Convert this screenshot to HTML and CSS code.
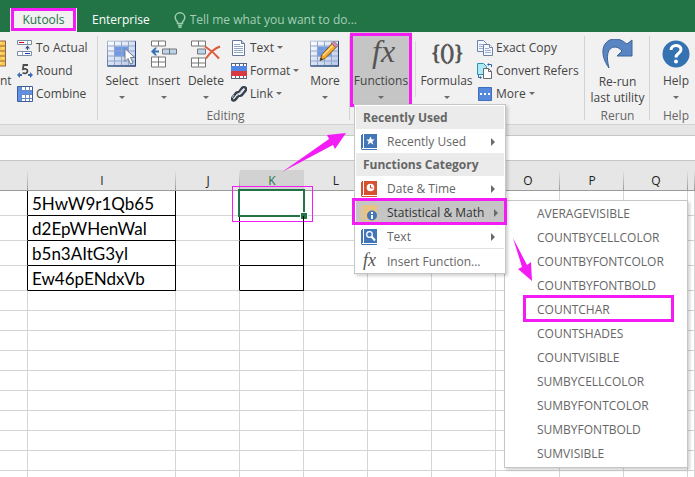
FILE: index.html
```html
<!DOCTYPE html>
<html lang="en">
<head>
<meta charset="utf-8">
<title>Workbook - Kutools</title>
<link rel="stylesheet" href="styles.css">
</head>
<body>
<svg class="defs" width="0" height="0" aria-hidden="true">
  <defs>
    <linearGradient id="cell" x1="0" y1="0" x2="1" y2="1"><stop offset="0" stop-color="#fff"/><stop offset="1" stop-color="#b4c6e6"/></linearGradient>
    <linearGradient id="frame" x1="0" y1="0" x2="1" y2="1"><stop offset="0" stop-color="#a9b8d0"/><stop offset="1" stop-color="#1e3d70"/></linearGradient>
    <symbol id="grid" viewBox="0 0 30 27">
      <rect x=".5" y=".5" width="28" height="25" fill="url(#cell)" stroke="url(#frame)"/>
      <path d="M8 6h14v10H8z" fill="#6f98e6"/>
      <path d="M1 5.500h27M1 10.500h27M1 15.500h27M1 20.500h27M7.500 1v24M14.500 1v24M21.500 1v24" stroke="#8fa5cc" fill="none"/>
      <path d="M28.500 1v24.500H1" stroke="#27467c" fill="none"/>
    </symbol>
    <symbol id="book" viewBox="0 0 16 16">
      <path d="M1 0h1v14H1zM3 0h13v14H3zM0 1h1v14h15v1H1l-1-1z" fill="currentColor"/>
    </symbol>
  </defs>
</svg>

<header class="tabs">
  <button class="tab tab-active marked">Kutools</button>
  <button class="tab">Enterprise</button>
  <label class="tell">
    <svg width="12" height="16" viewBox="0 0 12 16" fill="none" stroke="#9dcbb0" stroke-width="1.500"><path d="M3.500 11.500V10C2 8.500 1.200 7.300 1.200 5.500a4.800 4.700 0 0 1 9.600 0c0 1.800-.8 3-2.300 4.500v1.500zM4 13.500h4M4.500 15.300h3"/></svg>
    <input type="text" placeholder="Tell me what you want to do..." aria-label="Tell me">
  </label>
</header>

<section class="ribbon">
  <div class="group group-first">
    <div class="row">
      <button class="big content">
        <svg width="6" height="27" viewBox="0 0 6 27"><path d="M0 0h6v26H0z" fill="#8c6a45"/><path d="M0 1h5v4H0zM0 6h5v4H0zM0 11h5v4H0zM0 16h5v4H0zM0 21h5v4H0z" fill="#ffc64a"/><path d="M0 2h2v1H0zM2 7h2v1H2zM0 12h2v1H0zM2 17h2v1H2zM0 22h2v1H0z" fill="#fff0b0"/></svg>
        <span>nt</span><i class="down"></i>
      </button>
      <div class="stack">
        <button class="small">
          <svg width="16" height="16" viewBox="0 0 16 16"><path d="M.5.500h14v4H.5zM.5 11.500h14v4H.5z" fill="#fff" stroke="#7b8ba6"/><path d="M10.500 1v3M5.500 12v3" stroke="#9aa7bd"/><path d="M2 2h5v1H2z" fill="#d0021b"/><path d="M8 13h5v1H8z" fill="#1c3fc4"/><path d="M8 8.500l2.500-3 2.500 3h-2V10h-1V8.500z" fill="#35568c"/></svg>
          To Actual</button>
        <button class="small">
          <svg width="16" height="16" viewBox="0 0 16 16"><path d="M11 2H6.500L6 6.200c2-.8 4.500-.4 4.500 1.900S8 11 5.500 9.800" fill="none" stroke="#4c4c4c" stroke-width="1.800"/><path d="M0 12l3-3v2h2v2H3v2zM16 12l-3-3v2h-2v2h2v2z" fill="#3d6aa8"/></svg>
          Round</button>
        <button class="small">
          <svg width="16" height="16" viewBox="0 0 16 16"><path d="M.5.500h15v15H.5z" fill="#fff" stroke="#3d5f9c"/><path d="M1 1h3v14H1zM4 4h11v4H4z" fill="#5f92ee"/><path d="M4.500 1v14M8.500 1v14M12.500 1v14M1 4.500h14M4 8.500h11M4 12.500h11" stroke="#6c89bd"/></svg>
          Combine</button>
      </div>
    </div>
  </div>

  <div class="group group-editing">
    <div class="row">
      <button class="big">
        <svg width="30" height="27" viewBox="0 0 30 27"><use href="#grid"/><path d="M18 8v13l3-3 2.500 5.500 2.500-1-2.500-5.500h4z" fill="#fff" stroke="#707a8c"/></svg>
        <span>Select</span><i class="down"></i>
      </button>
      <button class="big">
        <svg width="27" height="27" viewBox="0 0 27 27" fill="#fff" stroke="#767676"><path d="M.5.500h14v5H.5zM7.500.500v5M.5 16.500h14v10H.5zM7.500 16v10M.5 21.500h14"/><path d="M11.500 8.500h14v5h-14z" fill="#bcd4ea"/><path d="M18.500 8v6"/><path d="M0 11l4-4h2L4 10h4v2H4l2 3H4z" fill="#3a73b4" stroke="none"/></svg>
        <span>Insert</span><i class="down"></i>
      </button>
      <button class="big">
        <svg width="30" height="27" viewBox="0 0 30 27" fill="#fff" stroke="#767676"><path d="M.5.500h14v5H.5zM7.500.500v5M.5 17.500h14v9H.5zM7.500 17v9M.5 22.500h14"/><path d="M6.500 8.500h8v5h-8z" fill="#bcd4ea"/><path d="M14 6c5 3 9 6 14 12M29 6c-6 2-10 6-14 12" fill="none" stroke="#e0573a" stroke-width="2"/></svg>
        <span>Delete</span><i class="down"></i>
      </button>
      <div class="stack">
        <button class="small">
          <svg width="16" height="16" viewBox="0 0 16 16"><path d="M1.500.500h9l3 3v12h-12z" fill="#fff" stroke="#64789c"/><path d="M10.500.500v3h3" fill="#c9d6ea" stroke="#64789c"/><path d="M3 4.500h6M3 6.500h9M3 8.500h9M3 10.500h9M3 12.500h9" stroke="#91a7c8"/></svg>
          Text<i class="down"></i></button>
        <button class="small">
          <svg width="16" height="16" viewBox="0 0 16 16"><path d="M0 0h16v16H0z" fill="#fff"/><path d="M0 3h16v5H0z" fill="#4f86e4"/><path d="M0 8h16v5H0z" fill="#d93a42"/><path d="M0 .5h16M0 15.500h16M.5 0v3M4.500 0v3M8.500 0v3M12.500 0v3M15.500 0v3M.5 13v3M4.500 13v3M8.500 13v3M12.500 13v3M15.500 13v3" stroke="#56647c"/></svg>
          Format<i class="down"></i></button>
        <button class="small">
          <svg width="16" height="16" viewBox="0 0 16 16" fill="none"><path d="M8 6l3-4c2-2 5 0 4 2l-4 5c-1 1-3 1-3 0M8 9l-3 4c-2 3-5 1-4-1l4-5c1-1 3-1 3 0" stroke="#39434f" stroke-width="2.500"/><path d="M6 10l5-6M3 9l-2 3M13 2l-2 2" stroke="#b9c5d2"/></svg>
          Link<i class="down"></i></button>
      </div>
      <button class="big">
        <svg width="30" height="27" viewBox="0 0 30 27"><use href="#grid"/><path d="M10 20l2-6L22 3l4 4-11 11z" fill="#f7a928" stroke="#80521d"/><path d="M13 15L23 5" stroke="#ffe09a" stroke-width="1.500"/><path d="M22 3l2-2 4 4-2 2z" fill="#e78dad" stroke="#85627f"/><path d="M10 20l1-3 2 2z" fill="#333"/></svg>
        <span>More</span><i class="down"></i>
      </button>
    </div>
    <div class="caption">Editing</div>
  </div>

  <div class="group group-functions">
    <div class="row">
      <button class="big functions marked">
        <svg class="glyph" width="26" height="28" viewBox="0 0 26 28" aria-hidden="true"><text x="4" y="22" font-size="32">fx</text></svg>
        <span>Functions</span><i class="down"></i>
      </button>
      <hr class="split">
      <button class="big formulas">
        <svg class="glyph upright" width="32" height="28" viewBox="0 0 32 28" aria-hidden="true"><text x="0" y="19" font-size="20">{()}</text></svg>
        <span>Formulas</span><i class="down"></i>
      </button>
      <div class="stack">
        <button class="small">
          <svg width="16" height="16" viewBox="0 0 16 16" fill="#f5f9ff" stroke="#6f83aa"><path d="M.5.500h6l3 3v8h-9z"/><path d="M2 4.500h4M2 6.500h4M2 8.500h4" stroke="#9bb0d2"/><path d="M6.500 4.500h6l3 3v8h-9z"/><path d="M12.500 4.500v3h3"/><path d="M8 8.500h4M8 10.500h6M8 12.500h6" stroke="#9bb0d2"/></svg>
          Exact Copy</button>
        <button class="small">
          <svg width="16" height="16" viewBox="0 0 16 16"><path d="M.5.500h6l3 3v8h-9z" fill="#aeeaf5" stroke="#2c94ad"/><path d="M6.500 5.500h5l3 3v7h-8z" fill="#fff" stroke="#6b6b6b"/><path d="M11.500 5.500v3h3" fill="none" stroke="#6b6b6b"/><path d="M11 1.500h3.500V4M4 14.500H1.500V12" fill="none" stroke="#2e66ac"/><path d="M12 0v3l-2-1.500zM3 13v3l2-1.500z" fill="#2e66ac"/></svg>
          Convert Refers</button>
        <button class="small">
          <svg width="16" height="16" viewBox="0 0 16 16"><path d="M1.500 1.500h13v13h-13z" fill="#5489dc" stroke="#3f6fb8"/><path d="M3 7h2v2H3zM7 7h2v2H7zM11 7h2v2h-2z" fill="#fff"/></svg>
          More<i class="down"></i></button>
      </div>
    </div>
    <div class="menu">
      <h2>Recently Used</h2>
      <button class="item"><svg class="blue" width="16" height="16" viewBox="0 0 16 16"><use href="#book"/><path d="M9.500 2.500l1.300 3h3l-2.400 2 1 3.200-2.900-1.900-2.900 1.900 1-3.200-2.400-2h3z" fill="#fff"/></svg>Recently Used<i class="right"></i></button>
      <h2>Functions Category</h2>
      <button class="item"><svg class="red" width="16" height="16" viewBox="0 0 16 16"><use href="#book"/><circle cx="9.500" cy="6.500" r="3.800" fill="#fff"/><path d="M9.500 4v3H12" stroke="#d6512f" fill="none"/></svg>Date &amp; Time<i class="right"></i></button>
      <button class="item item-open marked"><svg class="sand" width="16" height="16" viewBox="0 0 16 16"><use href="#book"/><circle cx="11" cy="10.500" r="5" fill="#4276b7"/><path d="M10 7h2v2h-2zM10 10h2v4h-2z" fill="#fff"/></svg>Statistical &amp; Math<i class="right"></i></button>
      <button class="item"><svg class="blue" width="16" height="16" viewBox="0 0 16 16"><use href="#book"/><circle cx="8.500" cy="5.500" r="2.800" fill="none" stroke="#fff" stroke-width="1.300"/><path d="M10.500 7.500l3.500 4" stroke="#fff" stroke-width="2"/></svg>Text<i class="right"></i></button>
      <hr>
      <button class="item"><svg class="glyph" width="16" height="16" viewBox="0 0 16 16" aria-hidden="true"><text x="2" y="12" font-size="18">fx</text></svg>Insert Function...</button>
    </div>
    <div class="menu submenu">
      <button class="item">AVERAGEVISIBLE</button>
      <button class="item">COUNTBYCELLCOLOR</button>
      <button class="item">COUNTBYFONTCOLOR</button>
      <button class="item">COUNTBYFONTBOLD</button>
      <button class="item marked">COUNTCHAR</button>
      <button class="item">COUNTSHADES</button>
      <button class="item">COUNTVISIBLE</button>
      <button class="item">SUMBYCELLCOLOR</button>
      <button class="item">SUMBYFONTCOLOR</button>
      <button class="item">SUMBYFONTBOLD</button>
      <button class="item">SUMVISIBLE</button>
    </div>
  </div>

  <div class="group group-rerun">
    <div class="row">
      <button class="big">
        <svg width="32" height="30" viewBox="0 0 32 30"><path d="M7 29C-4 14 1 0 13 0c6 0 9 3 12 5l5-4v16H15l5-5c-2-2-4-4-7-4C5 8 4 18 7 29z" fill="#5985c2" stroke="#3e6298"/></svg>
        <span>Re-run<br>last utility</span>
      </button>
    </div>
    <div class="caption">Rerun</div>
  </div>

  <div class="group group-help">
    <div class="row">
      <button class="big">
        <svg width="28" height="28" viewBox="0 0 28 28"><circle cx="14" cy="14" r="13.500" fill="#3572b2"/><path d="M9 10c0-6 10-6 10-.5 0 4-5 3.500-5 8" fill="none" stroke="#fff" stroke-width="3"/><circle cx="14" cy="21.500" r="2" fill="#fff"/></svg>
        <span>Help</span><i class="down"></i>
      </button>
    </div>
    <div class="caption">Help</div>
  </div>
</section>

<div class="formula-bar"></div>

<main class="sheet">
  <table>
    <colgroup><col class="c-first"><col class="c-wide"><col class="c"><col class="c"><col class="c"><col class="c"><col class="c"><col class="c"><col class="c"><col class="c"><col></colgroup>
    <thead><tr><th></th><th>I</th><th>J</th><th class="current">K</th><th>L</th><th></th><th></th><th>O</th><th>P</th><th>Q</th><th></th></tr></thead>
    <tbody>
      <tr class="data"><td></td><td>5HwW9r1Qb65</td><td></td><td><div class="selection"></div></td><td></td><td></td><td></td><td></td><td></td><td></td><td></td></tr>
      <tr class="data"><td></td><td>d2EpWHenWal</td><td></td><td></td><td></td><td></td><td></td><td></td><td></td><td></td><td></td></tr>
      <tr class="data"><td></td><td>b5n3AItG3yl</td><td></td><td></td><td></td><td></td><td></td><td></td><td></td><td></td><td></td></tr>
      <tr class="data"><td></td><td>Ew46pENdxVb</td><td></td><td></td><td></td><td></td><td></td><td></td><td></td><td></td><td></td></tr>
      <tr><td></td><td></td><td></td><td></td><td></td><td></td><td></td><td></td><td></td><td></td><td></td></tr>
      <tr><td></td><td></td><td></td><td></td><td></td><td></td><td></td><td></td><td></td><td></td><td></td></tr>
      <tr><td></td><td></td><td></td><td></td><td></td><td></td><td></td><td></td><td></td><td></td><td></td></tr>
      <tr><td></td><td></td><td></td><td></td><td></td><td></td><td></td><td></td><td></td><td></td><td></td></tr>
      <tr><td></td><td></td><td></td><td></td><td></td><td></td><td></td><td></td><td></td><td></td><td></td></tr>
      <tr><td></td><td></td><td></td><td></td><td></td><td></td><td></td><td></td><td></td><td></td><td></td></tr>
      <tr><td></td><td></td><td></td><td></td><td></td><td></td><td></td><td></td><td></td><td></td><td></td></tr>
      <tr><td></td><td></td><td></td><td></td><td></td><td></td><td></td><td></td><td></td><td></td><td></td></tr>
      <tr><td></td><td></td><td></td><td></td><td></td><td></td><td></td><td></td><td></td><td></td><td></td></tr>
      <tr><td></td><td></td><td></td><td></td><td></td><td></td><td></td><td></td><td></td><td></td><td></td></tr>
    </tbody>
  </table>
</main>

<svg class="arrows" width="540" height="290" viewBox="0 0 540 290" fill="#f41cf4" aria-hidden="true">
  <path d="M282 172L329 139 327 135 346 133 335 149 333 145z"/>
  <path d="M513 238L527 265 531 262 532 281 518 269 522 267z"/>
</svg>
</body>
</html>
```

FILE: styles.css
```css
* { box-sizing: border-box; }
body {
  margin: 0;
  height: 100vh;
  display: flex;
  flex-direction: column;
  position: relative;
  overflow: hidden;
  background: #e6e6e6;
  color: #444;
  font: 12px/16px "Open Sans", "Noto Sans", sans-serif;
}
button {
  border: 0;
  padding: 0;
  background: none;
  color: inherit;
  font: inherit;
  white-space: nowrap;
}
svg { flex: none; display: block; }
.defs, .arrows { position: absolute; top: 0; left: 0; pointer-events: none; }
.arrows { z-index: 5; }
.glyph { overflow: visible; font-family: "Liberation Serif", serif; font-style: italic; fill: #555; }
.upright { font-style: normal; stroke: #555; stroke-width: 1px; }

/* highlight frames */
.marked { position: relative; }
.marked::after {
  content: "";
  position: absolute;
  inset: 0;
  border: 3px solid #f41cf4;
  pointer-events: none;
}

.tabs {
  flex: none;
  height: 32px;
  padding-left: 10px;
  display: flex;
  align-items: flex-end;
  background: #227447;
  color: #fff;
}
.tab { height: 24px; padding: 0 15px; }
.tab-active { width: 67px; padding: 0; background: #f1f1f1; color: #227447; }
.tab-active::after { inset: 0 1px 1px; }
.tell { flex: 1; height: 24px; margin-left: 9px; display: flex; align-items: center; gap: 4px; }
.tell input {
  flex: 1;
  border: 0;
  padding: 0;
  background: none;
  font: inherit;
  outline: 0;
}
.tell input::placeholder { color: #a5cfb6; opacity: 1; }

.ribbon {
  flex: none;
  height: 93px;
  display: flex;
  position: relative;
  background: #f1f1f1;
  border-bottom: 1px solid #d2d2d2;
}
.group {
  flex: none;
  display: flex;
  flex-direction: column;
  justify-content: space-between;
  position: relative;
}
.group::after {
  content: "";
  position: absolute;
  top: 4px;
  bottom: 4px;
  right: 0;
  width: 1px;
  background: #d2d2d2;
}
.group-first { width: 98px; }
.group-editing { width: 252px; padding-left: 3px; }
.group-functions { width: 235px; }
.group-rerun { width: 65px; }
.group-help { width: 52px; }
.group-help::after { display: none; }
.row { display: flex; }
.caption { text-align: center; color: #666; }
.big {
  width: 42px;
  height: 74px;
  padding-top: 8px;
  display: flex;
  flex-direction: column;
  align-items: center;
}
.big span { margin-top: auto; }
.big .down { margin: 7px 0; }
.big svg { height: 28px; }
.content { width: 17px; align-items: flex-start; }
.content .down { visibility: hidden; }
.group-editing .stack { margin-left: 4px; width: 73px; }
.stack { display: flex; flex-direction: column; padding-top: 4px; }
.small { height: 23px; display: flex; align-items: center; gap: 3px; }
.down {
  flex: none;
  width: 0;
  height: 0;
  border: 3px solid transparent;
  border-top-color: #6b6b6b;
  border-bottom: 0;
}
.right {
  width: 0;
  height: 0;
  margin-left: auto;
  border: 4px solid transparent;
  border-left-color: #6b6b6b;
  border-right: 0;
}
.functions { width: 62px; height: 75px; padding-bottom: 1px; background: #c5c5c5; }
.functions.marked::after { top: 1px; }
.split { width: 1px; height: 56px; margin: 9px 0 0 3px; border: 0; background: #dadada; }
.formulas { width: 61px; }
.group-rerun .big { width: 65px; padding-top: 7px; }
.group-rerun .big svg { height: 30px; }
.group-help .big { width: 52px; }

.menu {
  position: absolute;
  z-index: 2;
  top: 72px;
  left: 4px;
  width: 152px;
  padding: 1px 1px 0;
  background: #fff;
  border: 1px solid #c6c6c6;
  box-shadow: 2px 2px 3px rgba(0, 0, 0, .18);
  color: #666;
}
.menu h2 {
  margin: 0;
  height: 23px;
  padding: 3px 7px;
  background: #ebebeb;
  font-size: 12px;
  line-height: 17px;
  font-weight: 700;
}
.menu hr { margin: 0 0 0 32px; border: 0; height: 1px; background: #e1e1e1; }
.item {
  width: 100%;
  height: 24px;
  padding: 2px 9px 0 5px;
  display: flex;
  align-items: center;
  gap: 10px;
  text-align: left;
}
.item-open { background: #c5c5c5; color: #333; }
.item-open::after { inset: -2px -3px -1px -4px; }
.submenu { top: 168px; left: 154px; width: 184px; padding: 0 1px 2px; z-index: 1; }
.submenu .item { padding-left: 31px; }
.submenu .marked::after { inset: -2px 12px -1px 17px; }
.blue { color: #4276b7; }
.red { color: #d6512f; }
.sand { color: #eac282; }

.formula-bar {
  flex: none;
  height: 26px;
  margin-top: 10px;
  background: #fff;
  border: solid #c6c6c6;
  border-width: 1px 0;
}
.sheet { flex: 1; min-height: 0; overflow: hidden; background: #fff; }
table { width: 100%; table-layout: fixed; border-spacing: 0; }
.c-first { width: 28px; }
.c-wide { width: 148px; }
.c { width: 64px; }
th {
  height: 30px;
  padding: 10px 0 0;
  background: linear-gradient(to bottom, #e6e6e6, #9b9b9b) right bottom / 1px 20px no-repeat #e6e6e6;
  border-bottom: 1px solid #9b9b9b;
  color: #222;
  font-weight: 400;
}
th.current { background: linear-gradient(#d2d2d2, #d2d2d2) bottom / 100% 20px no-repeat #e6e6e6; color: #227447; }
td { height: 20px; padding: 0 4px; border: solid #d4d4d4; border-width: 0 1px 1px 0; }
.data td {
  height: 25px;
  padding: 2px 4px 0;
  color: #000;
  font: 17px/22px Lato, "Open Sans", sans-serif;
}
.data td:nth-child(-n+4) { border-right-color: #000; }
.data td:nth-child(2), .data td:nth-child(4) { border-bottom-color: #000; }
.data td:nth-child(4) { position: relative; }
.selection {
  position: absolute;
  inset: -2px -2px -2px -2px;
  border: 2px solid #227447;
}
.selection::before {
  content: "";
  position: absolute;
  right: -4px;
  bottom: -4px;
  width: 6px;
  height: 6px;
  background: #227447;
  outline: 1px solid #fff;
}
.selection::after {
  content: "";
  position: absolute;
  inset: -5px -10px -7px -8px;
  border: 1px solid #f41cf4;
}
```
